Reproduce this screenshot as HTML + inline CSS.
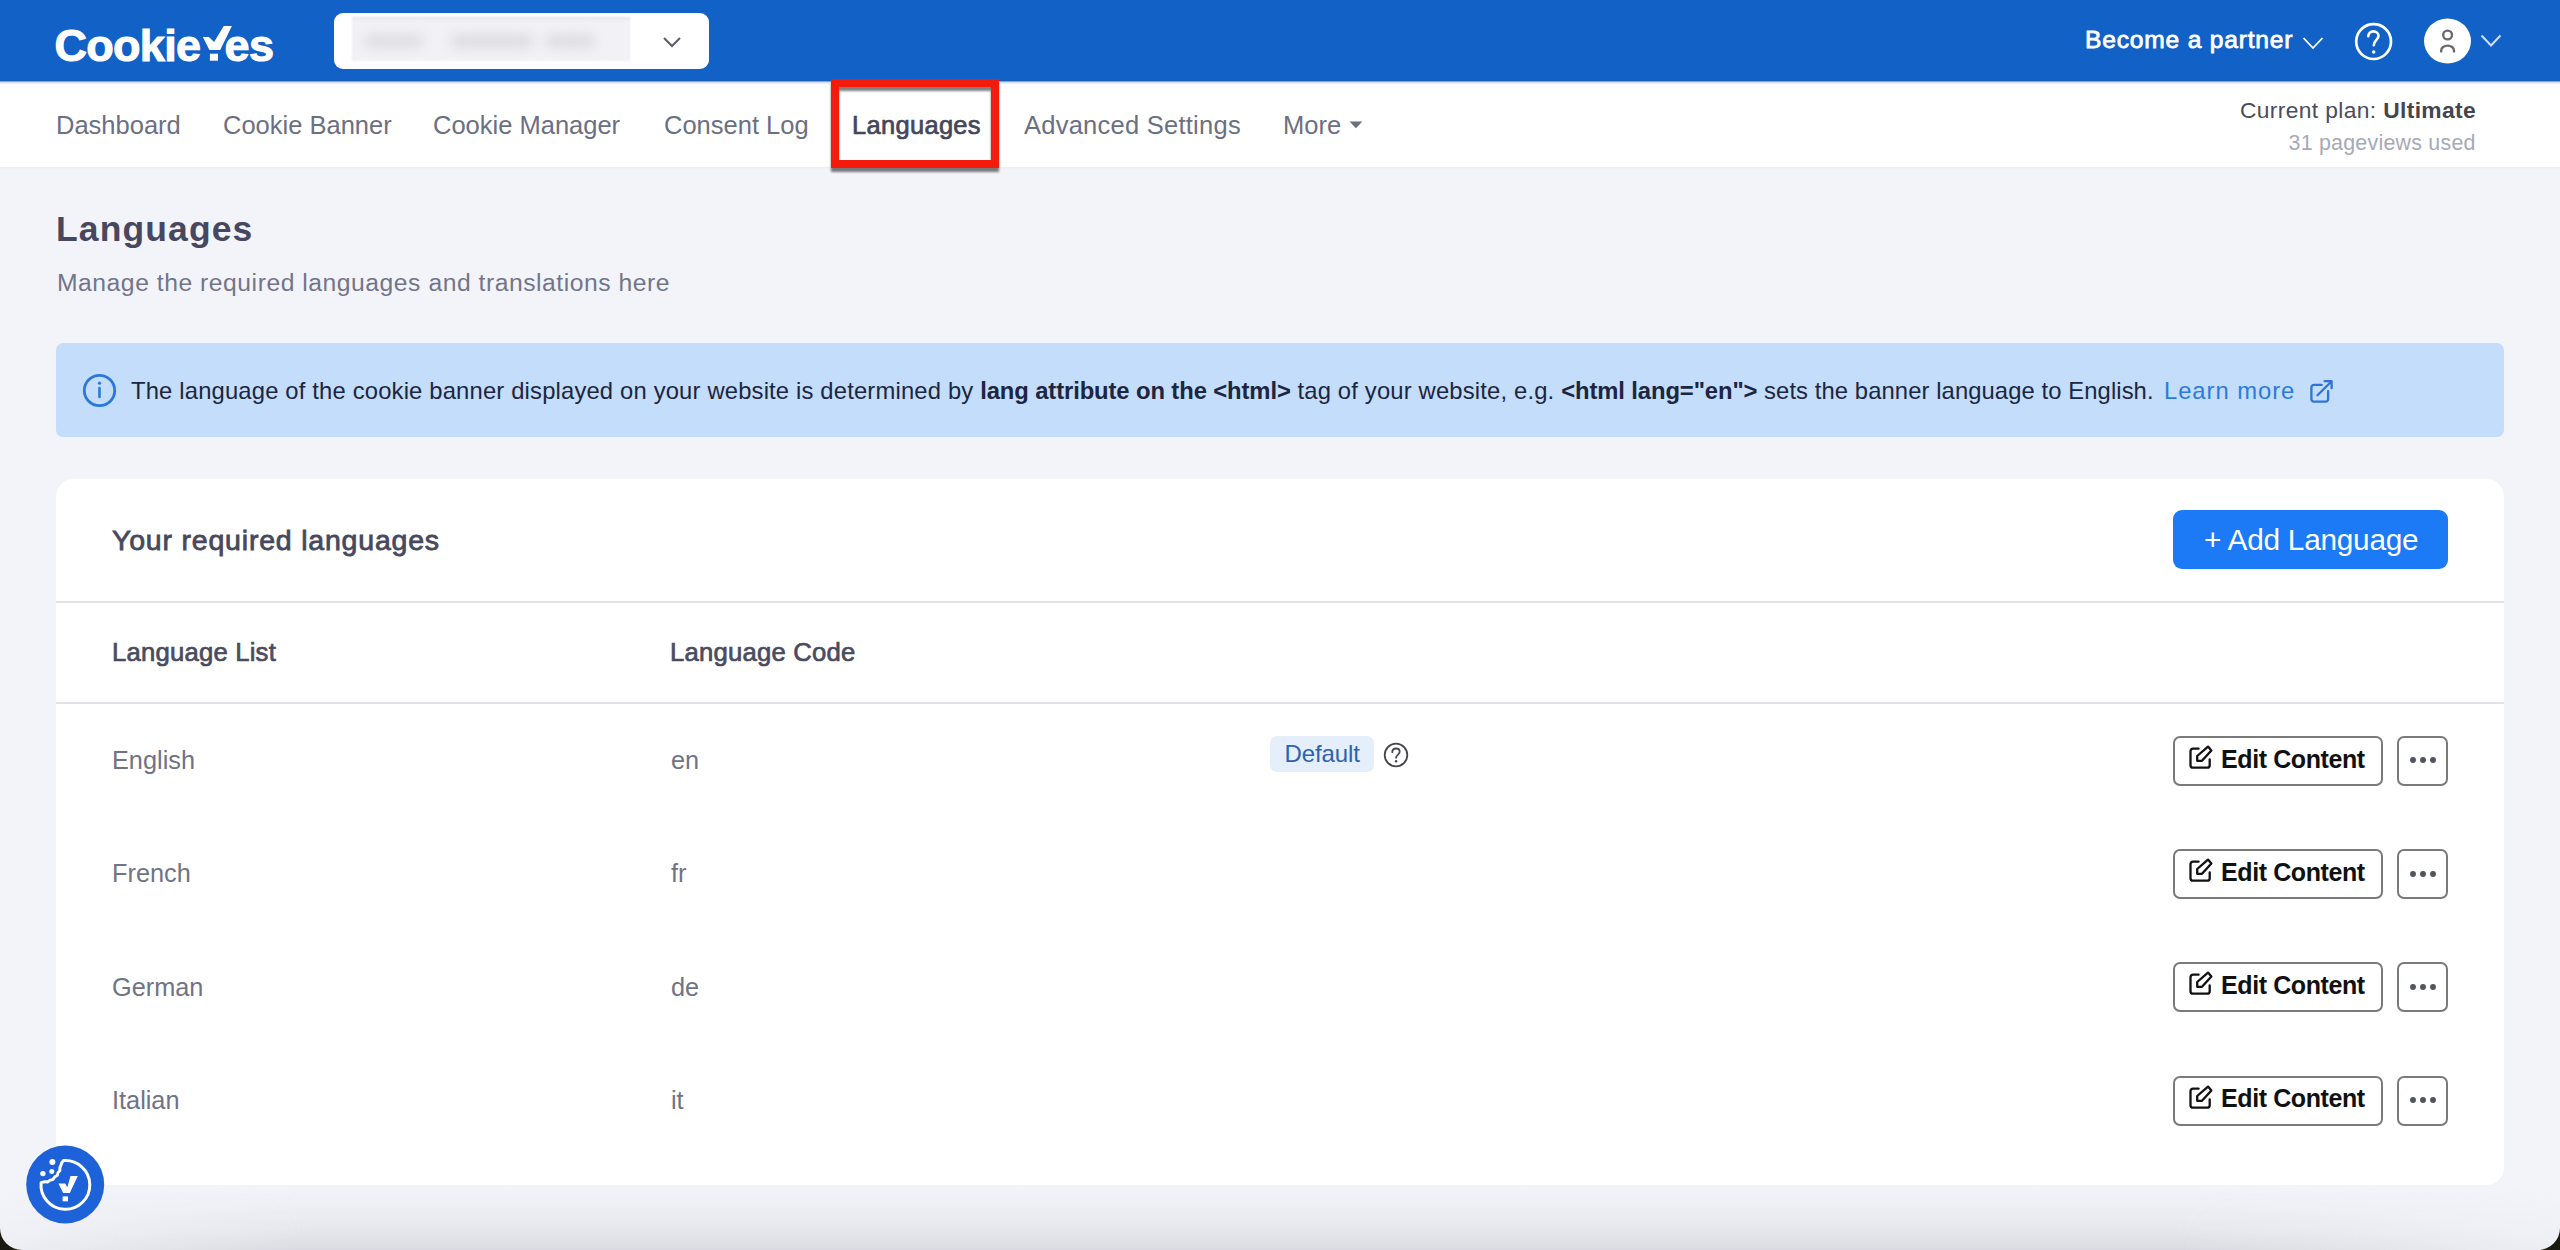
<!DOCTYPE html>
<html><head><meta charset="utf-8">
<style>
*{box-sizing:border-box;margin:0;padding:0}
html,body{width:2560px;height:1250px;overflow:hidden;background:#1A1A10}
body{font-family:"Liberation Sans",sans-serif;position:relative}
#win{position:absolute;left:0;top:0;width:2560px;height:1250px;background:#F3F4F9;border-radius:0 0 22px 22px;overflow:hidden}
.a{position:absolute;white-space:nowrap;line-height:1}
#hdr{position:absolute;left:0;top:0;width:2560px;height:81px;background:#1261C6}
#nav{position:absolute;left:0;top:81px;width:2560px;height:86px;background:#fff}
.nv{font-size:25.5px;color:#6B6F82}
#banner{position:absolute;left:56px;top:343px;width:2448px;height:94px;background:#C3DDFA;border-radius:7px}
#card{position:absolute;left:56px;top:479px;width:2448px;height:706px;background:#fff;border-radius:18px}
.hr{position:absolute;left:0;width:2448px;height:2px;background:#E1E2E8}
.row{font-size:25.3px;color:#6F7385}
.ebtn{position:absolute;left:2173px;width:210px;height:50px;border:2px solid #7A7A7A;border-radius:7px;background:#fff}
.dbtn{position:absolute;left:2397px;width:51px;height:50px;border:2px solid #7A7A7A;border-radius:7px;background:#fff}
.etxt{font-size:25px;font-weight:700;color:#111;letter-spacing:-0.4px}
</style></head>
<body>
<div id="win">
  <!-- header -->
  <div id="hdr">
    <div class="a" style="left:54.5px;top:23.2px;font-size:45px;font-weight:700;color:#fff;letter-spacing:-0.7px;-webkit-text-stroke:1.1px #fff">Cookie</div>
    <div class="a" style="left:224.5px;top:23.2px;font-size:45px;font-weight:700;color:#fff;letter-spacing:-0.6px;-webkit-text-stroke:1.1px #fff">es</div>
    <svg class="a" style="left:0;top:0" width="260" height="81" viewBox="0 0 260 81">
      <polygon points="202.9,36.9 208.9,36.9 214.1,42 223.8,25.9 231.9,25.9 220.2,49.9 209.4,49.9" fill="#fff"/>
      <rect x="209.9" y="53.7" width="8.1" height="7" fill="#fff"/>
    </svg>
    <!-- url select -->
    <div class="a" style="left:334px;top:13px;width:375px;height:56px;background:#fff;border-radius:9px"></div>
    <div class="a" style="left:352px;top:17px;width:278px;height:44px;background:#F2F2F6;box-shadow:inset 0 2px 2px #E2E2E8;filter:blur(0.8px)"></div>
    <div class="a" style="left:364px;top:34px;width:60px;height:14px;background:#DDDDE3;filter:blur(6px);border-radius:7px"></div>
    <div class="a" style="left:450px;top:34px;width:84px;height:14px;background:#DCDCE2;filter:blur(6px);border-radius:7px"></div>
    <div class="a" style="left:545px;top:34px;width:50px;height:14px;background:#DCDCE2;filter:blur(6px);border-radius:7px"></div>
    <svg class="a" style="left:662px;top:36px" width="20" height="13" viewBox="0 0 20 13"><path d="M2 2 L10 10 L18 2" fill="none" stroke="#5B5C6A" stroke-width="2"/></svg>
    <!-- right -->
    <div class="a" style="left:2085px;top:27.6px;font-size:24.6px;color:#fff;-webkit-text-stroke:0.8px #fff;letter-spacing:0.8px">Become a partner</div>
    <svg class="a" style="left:2302px;top:36px" width="22" height="14" viewBox="0 0 22 14"><path d="M1.5 2 L11 12 L20.5 2" fill="none" stroke="#fff" stroke-width="1.8"/></svg>
    <svg class="a" style="left:2354px;top:22px" width="39" height="39" viewBox="0 0 39 39">
      <circle cx="19.6" cy="19.6" r="17.4" fill="none" stroke="#fff" stroke-width="2.7"/>
      <path d="M14.3 14.2 C14.3 11.2 16.6 9.4 19.5 9.4 C22.4 9.4 24.5 11.3 24.5 14 C24.5 17.6 19.8 18.3 19.8 23.2" fill="none" stroke="#fff" stroke-width="2.6" stroke-linecap="round"/>
      <circle cx="19.7" cy="29.9" r="1.75" fill="#fff"/>
    </svg>
    <svg class="a" style="left:2424px;top:18px" width="47" height="46" viewBox="0 0 47 46">
      <ellipse cx="23.5" cy="23" rx="23.5" ry="22.5" fill="#fff"/>
      <circle cx="23.6" cy="17" r="4.4" fill="none" stroke="#6A6A6E" stroke-width="2.4"/>
      <path d="M17.2 33.4 L17.2 32.6 A6.4 5 0 0 1 30 32.6 L30 33.4" fill="none" stroke="#6A6A6E" stroke-width="2.4" stroke-linecap="round"/>
    </svg>
    <svg class="a" style="left:2479.5px;top:33.8px" width="22" height="14" viewBox="0 0 22 14"><path d="M1.5 1.5 L11 11.5 L20.5 1.5" fill="none" stroke="#CFE2FF" stroke-width="2"/></svg>
  </div>

  <!-- nav -->
  <div id="nav">
    <div class="a nv" style="left:56px;top:32.4px">Dashboard</div>
    <div class="a nv" style="left:223px;top:32.4px">Cookie Banner</div>
    <div class="a nv" style="left:433px;top:32.4px">Cookie Manager</div>
    <div class="a nv" style="left:664px;top:32.4px">Consent Log</div>
    <div class="a nv" style="left:852px;top:32.4px;color:#45465A;-webkit-text-stroke:0.7px #45465A;letter-spacing:0.3px">Languages</div>
    <div class="a nv" style="left:1024px;top:32.4px;letter-spacing:0.25px">Advanced Settings</div>
    <div class="a nv" style="left:1283px;top:32.4px">More</div>
    <svg class="a" style="left:1348px;top:39.6px" width="15" height="8" viewBox="0 0 15 8"><path d="M1.5 0.6 L14.3 0.6 L7.9 7.2 Z" fill="#6B6F82"/></svg>
    <div class="a" style="left:2240px;top:18.2px;font-size:22.8px;color:#4B4C58;letter-spacing:0.36px">Current plan: <b style="color:#44454F">Ultimate</b></div>
    <div class="a" style="left:2288.5px;top:51.6px;font-size:21.4px;color:#A6A9B8;letter-spacing:0.24px">31 pageviews used</div>
  </div>
  <div class="a" style="left:0;top:80px;width:2560px;height:4px;background:linear-gradient(180deg,#185CB8 0,#185CB8 1px,#86A8D8 1px,#86A8D8 2px,#D3E2FA 2px,#D3E2FA 3px,#EBEDF7 3px,#EBEDF7 4px)"></div>
  <div class="a" style="left:0;top:167px;width:2560px;height:3px;background:linear-gradient(180deg,#EDEEF2 0,#EDEEF2 1px,#F0F1F6 1px,#F0F1F6 2px,#F1F3FA 2px)"></div>
  <!-- red highlight -->
  <div class="a" style="left:831px;top:79px;width:168px;height:89px;border:8.6px solid #F41B0C;filter:drop-shadow(0 4.5px 1.2px rgba(0,0,0,0.5))"></div>

  <!-- title -->
  <div class="a" style="left:56px;top:211.8px;font-size:35.5px;font-weight:700;color:#47475F;letter-spacing:1.12px">Languages</div>
  <div class="a" style="left:57px;top:270.5px;font-size:24.7px;color:#72758A;letter-spacing:0.53px">Manage the required languages and translations here</div>

  <!-- banner -->
  <div id="banner">
    <svg class="a" style="left:26px;top:30px" width="35" height="35" viewBox="0 0 35 35">
      <circle cx="17.5" cy="17.5" r="15.2" fill="none" stroke="#2A79DA" stroke-width="2.8"/>
      <line x1="17.5" y1="15" x2="17.5" y2="24" stroke="#2A79DA" stroke-width="2.6" stroke-linecap="round"/>
      <circle cx="17.5" cy="10.2" r="1.6" fill="#2A79DA"/>
    </svg>
    <div class="a" style="left:75px;top:36.2px;font-size:23.8px;color:#1C2541;letter-spacing:0.17px">The language of the cookie banner displayed on your website is determined by <b style="letter-spacing:-0.1px">lang attribute on the &lt;html&gt;</b> tag of your website, e.g. <b style="letter-spacing:-0.1px">&lt;html lang="en"&gt;</b><span style="letter-spacing:0.09px"> sets the banner language to English.</span></div>
    <div class="a" style="left:2108px;top:36.2px;font-size:23.8px;color:#2B7BDD;letter-spacing:0.95px">Learn more</div>
    <svg class="a" style="left:2253px;top:36px" width="26" height="26" viewBox="0 0 26 26">
      <path d="M12.7 5.9 H5 A2.6 2.6 0 0 0 2.4 8.5 V20.1 A2.6 2.6 0 0 0 5 22.7 H16.5 A2.6 2.6 0 0 0 19.1 20.1 V12.1" fill="none" stroke="#2E74D3" stroke-width="2.3" stroke-linecap="round"/>
      <path d="M15.6 2.2 H22.6 V9.2 M22.6 2.2 L8.5 16.3" fill="none" stroke="#2E74D3" stroke-width="2.3" stroke-linecap="round" stroke-linejoin="round"/>
    </svg>
  </div>

  <!-- card -->
  <div id="card">
    <div class="a" style="left:56px;top:46.5px;font-size:28.5px;color:#47485E;-webkit-text-stroke:0.8px #47485E;letter-spacing:0.8px">Your required languages</div>
    <div class="a" style="left:2117px;top:31px;width:275px;height:59px;background:#1C7AF6;border-radius:9px"></div>
    <div class="a" style="left:2148px;top:45.5px;font-size:29.8px;color:#fff;letter-spacing:-0.25px">+ Add Language</div>
    <div class="hr" style="top:121.5px"></div>
    <div class="a sb" style="left:56px;top:161px;font-size:25.7px;color:#4A4B60;-webkit-text-stroke:0.7px #4A4B60;letter-spacing:0.2px">Language List</div>
    <div class="a sb" style="left:614px;top:161px;font-size:25.7px;color:#4A4B60;-webkit-text-stroke:0.7px #4A4B60;letter-spacing:0.2px">Language Code</div>
    <div class="hr" style="top:222.5px"></div>
  </div>
  <div class="a row" style="left:112px;top:748.0px">English</div>
  <div class="a row" style="left:671px;top:748.0px">en</div>
  <div class="ebtn" style="top:736.0px"></div>
  <svg class="a" style="left:2188px;top:744.0px" width="26" height="26" viewBox="0 0 26 26"><path d="M10.6 4.7 H5 A2.5 2.5 0 0 0 2.5 7.2 V21.2 A2.5 2.5 0 0 0 5 23.7 H19.2 A2.5 2.5 0 0 0 21.7 21.2 V15.3" fill="none" stroke="#111" stroke-width="2.3" stroke-linecap="round"/><path d="M20 2.6 L23.4 6.4 L14 16.8 L9.2 16.8 L9.2 12 Z" fill="none" stroke="#111" stroke-width="2.3" stroke-linejoin="round"/></svg>
  <div class="a etxt" style="left:2221px;top:746.7px">Edit Content</div>
  <div class="dbtn" style="top:736.0px"></div>
  <svg class="a" style="left:2409px;top:756.3px" width="28" height="8" viewBox="0 0 28 8"><circle cx="4" cy="4" r="2.95" fill="#50555E"/><circle cx="14" cy="4" r="2.95" fill="#50555E"/><circle cx="24" cy="4" r="2.95" fill="#50555E"/></svg>
  <div class="a row" style="left:112px;top:861.3px">French</div>
  <div class="a row" style="left:671px;top:861.3px">fr</div>
  <div class="ebtn" style="top:849.2px"></div>
  <svg class="a" style="left:2188px;top:857.2px" width="26" height="26" viewBox="0 0 26 26"><path d="M10.6 4.7 H5 A2.5 2.5 0 0 0 2.5 7.2 V21.2 A2.5 2.5 0 0 0 5 23.7 H19.2 A2.5 2.5 0 0 0 21.7 21.2 V15.3" fill="none" stroke="#111" stroke-width="2.3" stroke-linecap="round"/><path d="M20 2.6 L23.4 6.4 L14 16.8 L9.2 16.8 L9.2 12 Z" fill="none" stroke="#111" stroke-width="2.3" stroke-linejoin="round"/></svg>
  <div class="a etxt" style="left:2221px;top:859.9px">Edit Content</div>
  <div class="dbtn" style="top:849.2px"></div>
  <svg class="a" style="left:2409px;top:869.5px" width="28" height="8" viewBox="0 0 28 8"><circle cx="4" cy="4" r="2.95" fill="#50555E"/><circle cx="14" cy="4" r="2.95" fill="#50555E"/><circle cx="24" cy="4" r="2.95" fill="#50555E"/></svg>
  <div class="a row" style="left:112px;top:974.6px">German</div>
  <div class="a row" style="left:671px;top:974.6px">de</div>
  <div class="ebtn" style="top:962.4px"></div>
  <svg class="a" style="left:2188px;top:970.4px" width="26" height="26" viewBox="0 0 26 26"><path d="M10.6 4.7 H5 A2.5 2.5 0 0 0 2.5 7.2 V21.2 A2.5 2.5 0 0 0 5 23.7 H19.2 A2.5 2.5 0 0 0 21.7 21.2 V15.3" fill="none" stroke="#111" stroke-width="2.3" stroke-linecap="round"/><path d="M20 2.6 L23.4 6.4 L14 16.8 L9.2 16.8 L9.2 12 Z" fill="none" stroke="#111" stroke-width="2.3" stroke-linejoin="round"/></svg>
  <div class="a etxt" style="left:2221px;top:973.1px">Edit Content</div>
  <div class="dbtn" style="top:962.4px"></div>
  <svg class="a" style="left:2409px;top:982.7px" width="28" height="8" viewBox="0 0 28 8"><circle cx="4" cy="4" r="2.95" fill="#50555E"/><circle cx="14" cy="4" r="2.95" fill="#50555E"/><circle cx="24" cy="4" r="2.95" fill="#50555E"/></svg>
  <div class="a row" style="left:112px;top:1087.9px">Italian</div>
  <div class="a row" style="left:671px;top:1087.9px">it</div>
  <div class="ebtn" style="top:1075.6px"></div>
  <svg class="a" style="left:2188px;top:1083.6px" width="26" height="26" viewBox="0 0 26 26"><path d="M10.6 4.7 H5 A2.5 2.5 0 0 0 2.5 7.2 V21.2 A2.5 2.5 0 0 0 5 23.7 H19.2 A2.5 2.5 0 0 0 21.7 21.2 V15.3" fill="none" stroke="#111" stroke-width="2.3" stroke-linecap="round"/><path d="M20 2.6 L23.4 6.4 L14 16.8 L9.2 16.8 L9.2 12 Z" fill="none" stroke="#111" stroke-width="2.3" stroke-linejoin="round"/></svg>
  <div class="a etxt" style="left:2221px;top:1086.3px">Edit Content</div>
  <div class="dbtn" style="top:1075.6px"></div>
  <svg class="a" style="left:2409px;top:1095.9px" width="28" height="8" viewBox="0 0 28 8"><circle cx="4" cy="4" r="2.95" fill="#50555E"/><circle cx="14" cy="4" r="2.95" fill="#50555E"/><circle cx="24" cy="4" r="2.95" fill="#50555E"/></svg>

  <!-- default badge -->
  <div class="a" style="left:1270px;top:736px;width:104px;height:36px;background:#E5EFFC;border-radius:7px"></div>
  <div class="a" style="left:1284.5px;top:742.2px;font-size:24px;color:#2D63AE;letter-spacing:-0.1px">Default</div>
  <svg class="a" style="left:1383px;top:742px" width="26" height="26" viewBox="0 0 26 26">
    <circle cx="13" cy="13" r="11.3" fill="none" stroke="#46464E" stroke-width="1.8"/>
    <path d="M9.3 10.2 C9.3 7.8 11 6.5 13 6.5 C15.1 6.5 16.7 7.8 16.7 9.8 C16.7 12.6 13.1 12.6 13.1 15.8" fill="none" stroke="#46464E" stroke-width="1.8" stroke-linecap="round"/>
    <circle cx="13.1" cy="19.3" r="1.2" fill="#46464E"/>
  </svg>
  <!-- bottom shade -->
  <div class="a" style="left:0;top:1185px;width:2560px;height:65px;background:linear-gradient(180deg,rgba(200,202,210,0) 0%,rgba(200,202,210,0.12) 35%,rgba(200,202,210,0.3) 70%,rgba(192,194,202,0.5) 100%);-webkit-mask-image:linear-gradient(90deg,rgba(0,0,0,0.2) 0%,#000 12%,#000 85%,rgba(0,0,0,0.2) 100%)"></div>
  <!-- cookie float button -->
  <svg class="a" style="left:26px;top:1145px" width="79" height="79" viewBox="0 0 79 79">
    <circle cx="39.2" cy="39.5" r="39" fill="#1E62D9"/>
    <path d="M37.4 15.6 A24.4 24.4 0 1 1 15.1 37.6 Q19 36.3 21.5 37 Q23.5 34.6 27 34.4 Q28.4 31.4 31.3 30.4 Q31.6 27.2 33.8 25.6 Q33.5 22 35 20.2 Q35.2 17.5 37.4 15.6 Z" fill="none" stroke="#fff" stroke-width="3" stroke-linejoin="round"/>
    <circle cx="26.4" cy="16.9" r="3" fill="#fff"/>
    <circle cx="25.8" cy="26.6" r="2.5" fill="#fff"/>
    <circle cx="16.9" cy="28.6" r="2.7" fill="#fff"/>
    <polygon points="32.4,38.6 39.2,38.6 41.3,42.3 44.5,30.9 51.8,30.9 43.8,48 37.2,48" fill="#fff"/>
    <rect x="36.6" y="51.4" width="5.4" height="4.9" fill="#fff"/>
  </svg>
</div>
</body></html>
